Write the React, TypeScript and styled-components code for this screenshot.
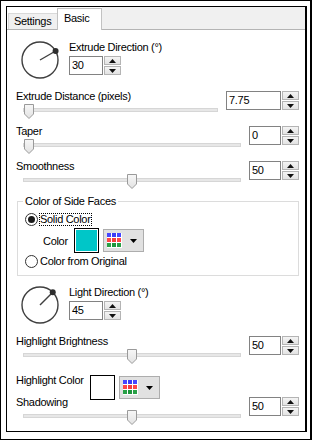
import React from "react";
import styled, { createGlobalStyle } from "styled-components";

const GlobalStyle = createGlobalStyle`
  html, body { margin: 0; padding: 0; background: #fff; }
  body {
    font-family: "Liberation Sans", Arial, sans-serif;
    font-size: 11px;
    letter-spacing: -0.3px;
    color: #000;
  }
  * { box-sizing: border-box; }
`;

const Frame = styled.div`
  width: 312px;
  height: 440px;
  border-style: solid;
  border-color: #000;
  border-width: 1px 2px 1px 1px;
  padding: 5px 3px 7px 5px;
  background: #fff;
`;

const Dialog = styled.div`
  height: 100%;
  border-style: solid;
  border-color: #000;
  border-width: 1px 2px 1px 1px;
  display: flex;
  flex-direction: column;
  background: #fff;
`;

const TabStrip = styled.div`
  flex: none;
  height: 23px;
  display: flex;
  align-items: flex-end;
  border-bottom: 1px solid #b4b4b4;
  background: #fff;
`;

const Tab = styled.div<{ $active?: boolean; $w: number }>`
  position: relative;
  width: ${(p) => p.$w}px;
  line-height: 14px;
  border: 1px solid ${(p) => (p.$active ? "#c2c2c2" : "#d9d9d9")};
  border-bottom: none;
  background: ${(p) => (p.$active ? "#fff" : "#f0f0f0")};
  height: ${(p) => (p.$active ? 22 : 16)}px;
  margin-bottom: ${(p) => (p.$active ? -1 : 0)}px;
  margin-left: ${(p) => (p.$active ? -1 : 1)}px;
  padding-top: ${(p) => (p.$active ? 2 : 0)}px;
  padding-left: ${(p) => (p.$active ? 6 : 5)}px;
  z-index: ${(p) => (p.$active ? 1 : 0)};
  white-space: nowrap;
`;

const TabFiller = styled.div`
  flex: 1;
  align-self: stretch;
  background: #f0f0f0;
`;

const Panel = styled.div`
  flex: 1;
  display: flex;
  flex-direction: column;
  padding: 0 6px 0 9px;
`;

const Label = styled.div`
  line-height: 14px;
  white-space: nowrap;
`;

/* ---------- Dial ---------- */
const DialRow = styled.div<{ $mt: number }>`
  display: flex;
  margin-top: ${(p) => p.$mt}px;
`;

const DialSvg = styled.svg`
  display: block;
  flex: none;
  margin-left: 4px;
`;

const DialControls = styled.div`
  margin-left: 9px;
  display: flex;
  flex-direction: column;
  gap: 2px;
`;

const Dial = ({ angle }: { angle: number }) => {
  const r = 18;
  const c = 20;
  const a = (angle * Math.PI) / 180;
  const kx = c + r * Math.cos(a);
  const ky = c - r * Math.sin(a);
  return (
    <DialSvg width="40" height="40" viewBox="0 0 40 40">
      <circle cx={c} cy={c} r={r} fill="none" stroke="#3f3f3f" strokeWidth="1.4" />
      <line x1={c} y1={c} x2={kx} y2={ky} stroke="#3f3f3f" strokeWidth="1.4" />
      <circle cx={kx} cy={ky} r="3" fill="#2e2e2e" />
    </DialSvg>
  );
};

/* ---------- Spin box ---------- */
const SpinWrap = styled.div`
  flex: none;
  display: flex;
  gap: 1px;
  height: 19px;
`;

const SpinField = styled.div<{ $w: number }>`
  width: ${(p) => p.$w}px;
  height: 19px;
  border: 1px solid #828282;
  background: #fff;
  padding-left: 2px;
  line-height: 17px;
`;

const SpinButtons = styled.div`
  width: 17px;
  display: flex;
  flex-direction: column;
  gap: 1px;
`;

const SpinBtn = styled.div`
  flex: 1;
  border: 1px solid #b4b4b4;
  background: linear-gradient(#f4f4f4, #e3e3e3);
  display: flex;
  align-items: center;
  justify-content: center;
`;

const Arrow = ({ up }: { up?: boolean }) => (
  <svg width="7" height="4" viewBox="0 0 7 4" style={{ display: "block" }}>
    <polygon points={up ? "0,4 7,4 3.5,0" : "0,0 7,0 3.5,4"} fill="#111" />
  </svg>
);

const SpinBox = ({ value, w }: { value: string; w: number }) => (
  <SpinWrap>
    <SpinField $w={w}>{value}</SpinField>
    <SpinButtons>
      <SpinBtn>
        <Arrow up />
      </SpinBtn>
      <SpinBtn>
        <Arrow />
      </SpinBtn>
    </SpinButtons>
  </SpinWrap>
);

/* ---------- Slider ---------- */
const SliderRow = styled.div<{ $mt: number }>`
  display: grid;
  grid-template-columns: 1fr auto;
  margin-top: ${(p) => p.$mt}px;
`;

const SliderLeft = styled.div`
  display: flex;
  flex-direction: column;
  min-width: 0;
`;

const SliderArea = styled.div`
  position: relative;
  height: 15px;
  margin: 1px 8px 0 7px;
`;

const Track = styled.div`
  margin-top: 4px;
  height: 4px;
  background: #e7e7e7;
  border: 1px solid #d6d6d6;
`;

const Thumb = styled.svg`
  position: absolute;
  top: 0;
  display: block;
`;

const SliderSpin = styled.div`
  margin-top: 2px;
`;

const Slider = ({
  label,
  value,
  fraction,
  w,
  mt,
}: {
  label: string;
  value: string;
  fraction: number;
  w: number;
  mt: number;
}) => (
  <SliderRow $mt={mt}>
    <SliderLeft>
      <Label>{label}</Label>
      <SliderArea>
        <Track />
        <Thumb
          width="10"
          height="15"
          viewBox="0 0 10 15"
          style={{ left: `calc(1px + (100% - 12px) * ${fraction})` }}
        >
          <defs>
            <linearGradient id="tg" x1="0" y1="0" x2="0" y2="1">
              <stop offset="0" stopColor="#f7f7f7" />
              <stop offset="1" stopColor="#e2e2e2" />
            </linearGradient>
          </defs>
          <polygon
            points="0.5,0.5 9.5,0.5 9.5,10 5,14.5 0.5,10"
            fill="url(#tg)"
            stroke="#9a9a9a"
            strokeWidth="1"
          />
        </Thumb>
      </SliderArea>
    </SliderLeft>
    <SliderSpin>
      <SpinBox value={value} w={w} />
    </SliderSpin>
  </SliderRow>
);

/* ---------- Group box ---------- */
const Group = styled.fieldset`
  margin: 5px 0 0 1px;
  padding: 0 5px 7px 5px;
  border: 1px solid #dcdcdc;
  min-width: 0;
`;

const Legend = styled.legend`
  padding: 0 2px;
  line-height: 14px;
`;

const RadioRow = styled.div<{ $mt: number }>`
  display: flex;
  align-items: center;
  height: 14px;
  margin: ${(p) => p.$mt}px 0 0 2px;
`;

const RadioText = styled.span<{ $focus?: boolean }>`
  margin-left: 1px;
  line-height: 11px;
  border: 1px dotted ${(p) => (p.$focus ? "#000" : "transparent")};
  white-space: nowrap;
`;

const Radio = ({ checked }: { checked?: boolean }) => (
  <svg width="13" height="13" viewBox="0 0 13 13" style={{ display: "block", flex: "none" }}>
    <circle cx="6.5" cy="6.5" r="6" fill="#fff" stroke="#333" strokeWidth="1" />
    {checked && <circle cx="6.5" cy="6.5" r="3.5" fill="#1b1b1b" />}
  </svg>
);

/* ---------- Color rows ---------- */
const ColorRow = styled.div<{ $mt: number; $mb?: number }>`
  display: flex;
  align-items: center;
  height: 25px;
  margin-top: ${(p) => p.$mt}px;
  margin-bottom: ${(p) => p.$mb ?? 0}px;
`;

const ColorLabel = styled(Label)<{ $w: number; $ml: number; $top?: boolean }>`
  width: ${(p) => p.$w}px;
  margin-left: ${(p) => p.$ml}px;
  align-self: ${(p) => (p.$top ? "flex-start" : "center")};
  margin-top: ${(p) => (p.$top ? -2 : 0)}px;
`;

const Swatch = styled.div<{ $color: string }>`
  width: 25px;
  height: 25px;
  border: 1px solid #000;
  padding: 1px;
  background: #fff;
  &::after {
    content: "";
    display: block;
    width: 100%;
    height: 100%;
    background: ${(p) => p.$color};
  }
`;

const PickerButton = styled.div`
  margin-left: 4px;
  width: 41px;
  height: 23px;
  border: 1px solid #adadad;
  background: #e1e1e1;
  display: flex;
  align-items: center;
  padding-left: 3px;
  gap: 8px;
`;

const gridColors = [
  ["#4646ff", "#3c3cf5", "#4646ff"],
  ["#ff4646", "#f53c3c", "#ff4646"],
  ["#28a046", "#1e963c", "#28a046"],
];

const PaletteIcon = () => (
  <svg width="15" height="15" viewBox="0 0 15 15" style={{ display: "block" }}>
    <rect x="0" y="0" width="15" height="15" fill="#fff" />
    {gridColors.map((row, r) =>
      row.map((c, i) => (
        <rect key={`${r}-${i}`} x={i * 5} y={r * 5} width="4" height="4" fill={c} />
      ))
    )}
  </svg>
);

const DropArrow = () => (
  <svg width="7" height="4" viewBox="0 0 7 4" style={{ display: "block" }}>
    <polygon points="0,0 7,0 3.5,4" fill="#000" />
  </svg>
);

const ColorPicker = () => (
  <PickerButton>
    <PaletteIcon />
    <DropArrow />
  </PickerButton>
);

export default function App() {
  return (
    <>
      <GlobalStyle />
      <Frame>
        <Dialog>
          <TabStrip>
            <Tab $w={50}>Settings</Tab>
            <Tab $active $w={45}>
              Basic
            </Tab>
            <TabFiller />
          </TabStrip>
          <Panel>
            <DialRow $mt={10}>
              <Dial angle={30} />
              <DialControls>
                <Label>Extrude Direction (°)</Label>
                <SpinBox value="30" w={34} />
              </DialControls>
            </DialRow>

            <Slider mt={9} label="Extrude Distance (pixels)" value="7.75" fraction={0} w={55} />
            <Slider mt={5} label="Taper" value="0" fraction={0} w={32} />
            <Slider mt={5} label="Smoothness" value="50" fraction={0.5} w={32} />

            <Group>
              <Legend>Color of Side Faces</Legend>
              <RadioRow $mt={4}>
                <Radio checked />
                <RadioText $focus>Solid Color</RadioText>
              </RadioRow>
              <ColorRow $mt={2}>
                <ColorLabel $w={31} $ml={20}>
                  Color
                </ColorLabel>
                <Swatch $color="#00c6c8" />
                <ColorPicker />
              </ColorRow>
              <RadioRow $mt={1}>
                <Radio />
                <RadioText>Color from Original</RadioText>
              </RadioRow>
            </Group>

            <DialRow $mt={9}>
              <Dial angle={45} />
              <DialControls>
                <Label>Light Direction (°)</Label>
                <SpinBox value="45" w={34} />
              </DialControls>
            </DialRow>

            <Slider mt={9} label="Highlight Brightness" value="50" fraction={0.5} w={32} />

            <ColorRow $mt={11} $mb={-5}>
              <ColorLabel $w={74} $ml={0} $top>
                Highlight Color
              </ColorLabel>
              <Swatch $color="#ffffff" />
              <ColorPicker />
            </ColorRow>

            <Slider mt={0} label="Shadowing" value="50" fraction={0.5} w={32} />
          </Panel>
        </Dialog>
      </Frame>
    </>
  );
}
